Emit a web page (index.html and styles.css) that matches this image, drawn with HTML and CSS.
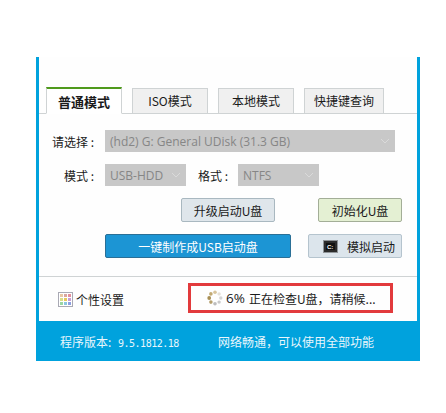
FILE: index.html
```html
<!DOCTYPE html>
<html>

<head>
    <meta charset="utf-8">
    <title>U盘启动</title>
    <link rel="stylesheet" href="styles.css">
</head>

<body>
	<div class="window">
		<div class="tabs">
			<div class="tab tab-active">普通模式</div>
			<div class="tab">ISO模式</div>
			<div class="tab">本地模式</div>
			<div class="tab tab-wide">快捷键查询</div>
		</div>

		<div class="row row-first">
			<span class="label">请选择 :</span>
			<div class="select select-disk">
				<span>(hd2) G: General UDisk (31.3 GB)</span>
				<svg class="chev" width="10" height="6" viewBox="0 0 10 6"><path d="M1 1l4 4 4-4" fill="none" stroke="#dadada" stroke-width="1"/></svg>
			</div>
		</div>

		<div class="row">
			<span class="label">模式 :</span>
			<div class="select select-small">
				<span>USB-HDD</span>
				<svg class="chev" width="10" height="6" viewBox="0 0 10 6"><path d="M1 1l4 4 4-4" fill="none" stroke="#dadada" stroke-width="1"/></svg>
			</div>
			<span class="label label-format">格式 :</span>
			<div class="select select-small">
				<span>NTFS</span>
				<svg class="chev" width="10" height="6" viewBox="0 0 10 6"><path d="M1 1l4 4 4-4" fill="none" stroke="#dadada" stroke-width="1"/></svg>
			</div>
		</div>

		<div class="row row-buttons">
			<button class="btn btn-upgrade">升级启动U盘</button>
			<button class="btn btn-init">初始化U盘</button>
		</div>

		<div class="row row-buttons">
			<button class="btn btn-make">一键制作成USB启动盘</button>
			<button class="btn btn-sim">
				<svg width="15" height="13" viewBox="0 0 15 13">
					<rect x="0.5" y="0.5" width="14" height="12" fill="#2b2b2b" stroke="#8f9498"/>
					<rect x="3" y="3" width="9" height="7" fill="#111"/>
					<text x="4" y="9" font-size="6" font-weight="700" fill="#fff" font-family="Liberation Sans">C:</text>
				</svg>
				<span>模拟启动</span>
			</button>
		</div>

		<div class="bottom">
			<div class="custom">
				<svg width="15" height="15" viewBox="0 0 15 15">
					<rect x="0.5" y="0.5" width="14" height="14" fill="#fff" stroke="#a9a9b4"/>
					<rect x="2" y="2" width="3" height="3" fill="#e9c9a4"/>
					<rect x="6" y="2" width="3" height="3" fill="#d9a6a0"/>
					<rect x="10" y="2" width="3" height="3" fill="#e58f9c"/>
					<rect x="2" y="6" width="3" height="3" fill="#d8dc8c"/>
					<rect x="6" y="6" width="3" height="3" fill="#e8c95c"/>
					<rect x="10" y="6" width="3" height="3" fill="#c79bd6"/>
					<rect x="2" y="10" width="3" height="3" fill="#9ad6a4"/>
					<rect x="6" y="10" width="3" height="3" fill="#8cc6de"/>
					<rect x="10" y="10" width="3" height="3" fill="#8d9fe0"/>
				</svg>
				<span>个性设置</span>
			</div>
			<div class="status">
				<svg width="16" height="16" viewBox="0 0 16 16">
					<circle cx="8" cy="2.2" r="1.8" fill="#d8c49c"/>
					<circle cx="12.1" cy="3.9" r="1.7" fill="#e4e0d8"/>
					<circle cx="13.8" cy="8" r="1.7" fill="#d4d4d4"/>
					<circle cx="12.1" cy="12.1" r="1.7" fill="#c9c9c9"/>
					<circle cx="8" cy="13.8" r="1.8" fill="#bdbdbd"/>
					<circle cx="3.9" cy="12.1" r="1.8" fill="#b59f6c"/>
					<circle cx="2.2" cy="8" r="1.9" fill="#a88f54"/>
					<circle cx="3.9" cy="3.9" r="1.8" fill="#c2aa74"/>
				</svg>
				<span class="percent">6%</span>
				<span>正在检查U盘，请稍候...</span>
			</div>
		</div>

		<div class="footer">
			<span class="version">程序版本: <span class="version-num">9.5.1812.18</span></span>
			<span>网络畅通，可以使用全部功能</span>
		</div>
	</div>
</body>

</html>
```
FILE: styles.css
```css
body {
	margin: 0;
	background-color: white;
	color: #1a1a1a;
	font-family: "Noto Sans CJK SC", "Noto Sans", sans-serif;
	font-size: 12px;
}

.window {
	width: 378px;
	margin: 57px 0 0 36px;
	background-color: #fefefe;
	border-left: 3px solid #00a2dd;
	border-right: 3px solid #00a2dd;
}

.tabs {
	display: flex;
	align-items: flex-end;
	gap: 10px;
	height: 56px;
	padding-left: 7px;
	border-bottom: 1px solid #cfd3d4;
}

.tab {
	box-sizing: border-box;
	width: 76px;
	height: 26px;
	margin-bottom: -1px;
	line-height: 24px;
	text-align: center;
	background-color: #f0f0f0;
	border: 1px solid #cfd3d4;
}

.tab-active {
	height: 27px;
	line-height: 25px;
	font-size: 13px;
	font-weight: 700;
	background-color: white;
	border-top: 2px solid #4f9a1c;
	border-bottom-color: white;
}

.tab-wide {
	width: 80px;
}

.row {
	display: flex;
	align-items: center;
	height: 22px;
	margin-top: 12px;
}

.row-first {
	margin-top: 16px;
}

.row-buttons {
	height: 24px;
	padding-left: 66px;
	padding-right: 15px;
	justify-content: space-between;
}

.label {
	box-sizing: border-box;
	width: 66px;
	padding-right: 11px;
	text-align: right;
	white-space: nowrap;
}

.label-format {
	width: 52px;
	padding-right: 10px;
}

.select {
	box-sizing: border-box;
	display: flex;
	align-items: center;
	justify-content: space-between;
	height: 22px;
	padding: 0 5px;
	background-color: #c8c8c8;
	color: #868686;
	font-family: "Open Sans", "Noto Sans CJK SC", sans-serif;
	font-size: 12px;
}

.select-disk {
	width: 290px;
}

.select-small {
	width: 81px;
}

.btn {
	box-sizing: border-box;
	height: 24px;
	padding: 0;
	border-radius: 2px;
	font-family: inherit;
	font-size: 12px;
	color: #1a1a1a;
}

.btn-upgrade {
	width: 94px;
	margin-left: 76px;
	background-color: #dfe6eb;
	border: 1px solid #a9b8c0;
}

.btn-init {
	width: 84px;
	background-color: #e4f0d3;
	border: 1px solid #a3ae97;
}

.btn-make {
	width: 186px;
	background-color: #1c95d4;
	border: 1px solid #2a6f96;
	color: white;
}

.btn-sim {
	display: flex;
	align-items: center;
	gap: 9px;
	width: 94px;
	padding-left: 14px;
	background-color: #dce5ec;
	border: 1px solid #b5c4ce;
}

.bottom {
	display: flex;
	align-items: center;
	height: 44px;
	margin-top: 18px;
	padding-left: 19px;
	border-top: 1px solid #cfd3d4;
}

.custom {
	display: flex;
	align-items: center;
	gap: 3px;
	width: 130px;
}

.status {
	box-sizing: border-box;
	display: flex;
	align-items: center;
	gap: 3px;
	width: 205px;
	height: 30px;
	margin-bottom: 2px;
	padding-left: 16px;
	border: 3px solid #e23a3c;
	white-space: nowrap;
}

.percent {
	margin-right: 1px;
	font-family: "Open Sans", sans-serif;
	font-size: 13.5px;
}

.footer {
	display: flex;
	align-items: center;
	height: 40px;
	margin: 0 -3px;
	padding-left: 24px;
	background-color: #00a2dd;
	color: #e8f6fc;
}

.version {
	width: 158px;
}

.version-num {
	margin-left: 4px;
	font-family: "DejaVu Sans Mono", monospace;
	font-size: 10px;
	letter-spacing: -0.5px;
}
```
